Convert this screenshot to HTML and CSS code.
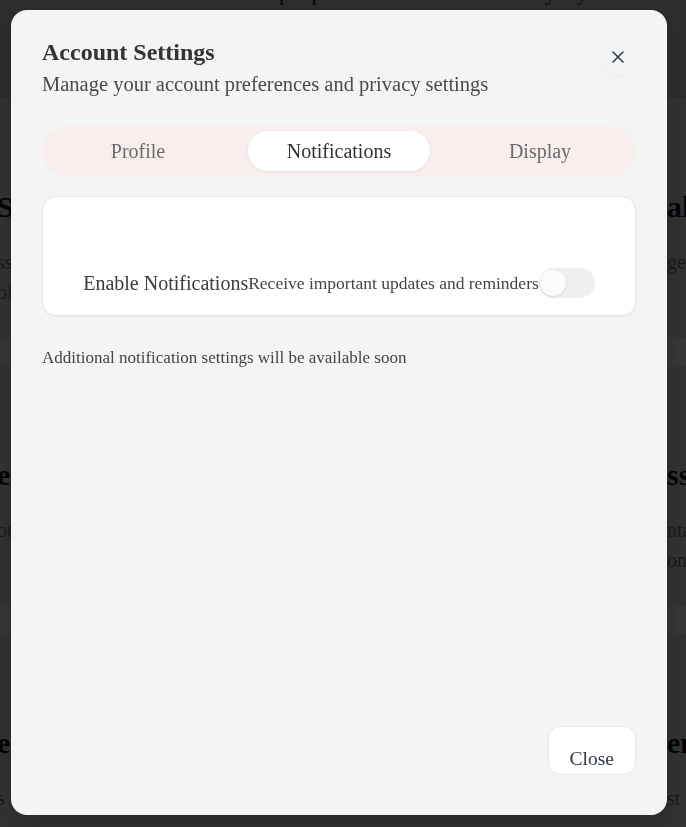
FILE: index.html
```html
<!DOCTYPE html>
<html lang="en">
<head>
<meta charset="utf-8">
<title>Account Settings</title>
<link rel="stylesheet" href="styles.css">
</head>
<body>
<div class="page">
  <header class="page-header">
    <p class="page-tagline">Simple practices for a calmer everyday life</p>
  </header>
  <section class="feature-row">
    <div class="feature feature-left">
      <h2>Sleep rituals</h2>
      <p>ssential evening habits</p>
      <p>olor and calm</p>
    </div>
    <div class="feature feature-right">
      <h2>al goals</h2>
      <p>get started today</p>
    </div>
    <div class="feature-band"></div>
  </section>
  <section class="feature-row">
    <div class="feature feature-left">
      <h2>e:</h2>
      <p>our daily notes</p>
    </div>
    <div class="feature feature-right">
      <h2>ss</h2>
      <p>ntain focus</p>
      <p>on the path</p>
    </div>
    <div class="feature-band"></div>
  </section>
  <section class="feature-row">
    <div class="feature feature-left">
      <h2>e</h2>
      <p>s</p>
    </div>
    <div class="feature feature-right">
      <h2>en</h2>
      <p>st</p>
    </div>
    <div class="feature-band"></div>
  </section>
</div>

<div class="overlay">
  <div class="modal" role="dialog" aria-labelledby="modal-title">
    <div class="modal-header">
      <div class="modal-heading">
        <h1 id="modal-title" class="modal-title">Account Settings</h1>
        <p class="modal-subtitle">Manage your account preferences and privacy settings</p>
      </div>
      <button class="icon-close" aria-label="Close">
        <svg width="12" height="12" viewBox="0 0 12 12" aria-hidden="true">
          <path d="M1 1 L11 11 M11 1 L1 11" stroke="#2d3748" stroke-width="1.5" stroke-linecap="round" fill="none"/>
        </svg>
      </button>
    </div>

    <div class="tabs" role="tablist">
      <button class="tab" role="tab">Profile</button>
      <button class="tab tab-active" role="tab">Notifications</button>
      <button class="tab" role="tab">Display</button>
    </div>

    <div class="setting-card">
      <div class="setting-row">
        <span class="setting-label">Enable Notifications</span>
        <span class="setting-desc">Receive important updates and reminders</span>
        <span class="switch" role="switch" aria-checked="false"><span class="switch-knob"></span></span>
      </div>
    </div>

    <p class="note">Additional notification settings will be available soon</p>

    <div class="modal-footer">
      <button class="btn-close">Close</button>
    </div>
  </div>
</div>
</body>
</html>
```

FILE: styles.css
```css
html, body {
  margin: 0;
  height: 100%;
  overflow: hidden;
}

body {
  font-family: "Liberation Serif", "Times New Roman", serif;
  background: #e8e8e8;
}

/* ---------- background page ---------- */
.page {
  height: 827px;
  overflow: hidden;
  background: #e8e8e8;
}

.page-header {
  height: 98px;
  background: #cfcfcf;
  overflow: hidden;
}

.page-tagline {
  margin: -19px 0 0;
  padding-left: 180px;
  text-align: center;
  font-size: 22px;
  line-height: 24px;
  color: #222;
}

.feature-row {
  height: 268px;
  display: grid;
  grid-template-columns: 11px 1fr 19px;
  grid-template-rows: 1fr 28px;
}

.feature {
  padding-top: 90px;
  white-space: nowrap;
}

.feature-left {
  grid-column: 1;
  margin-left: -3px;
}

.feature-right {
  grid-column: 3;
}

.feature h2 {
  margin: 0;
  font-size: 30px;
  line-height: 38px;
  font-weight: 700;
  color: #0d1420;
}

.feature p {
  margin: 0;
  font-size: 20px;
  line-height: 30px;
  color: #777;
}

.feature h2 + p {
  margin-top: 21px;
}

.feature-band {
  grid-column: 1 / -1;
  grid-row: 2;
  background: #ffffff;
}

/* ---------- overlay + modal ---------- */
.overlay {
  position: fixed;
  inset: 0;
  background: rgba(0, 0, 0, 0.78);
  padding: 10px 19px 12px 11px;
  display: flex;
}

.modal {
  width: 656px;
  height: 805px;
  box-sizing: border-box;
  background: #f4f4f4;
  border-radius: 16px;
  padding: 27px 31px 40px;
  display: flex;
  flex-direction: column;
  box-shadow: 0 10px 30px rgba(0, 0, 0, 0.25);
}

.modal-header {
  display: flex;
  justify-content: space-between;
  align-items: flex-start;
}

.modal-title {
  margin: 0;
  font-size: 24px;
  line-height: 30px;
  font-weight: 700;
  color: #333333;
}

.modal-subtitle {
  margin: 3px 0 0;
  font-size: 20.5px;
  line-height: 28px;
  color: #4a4a4a;
}

.icon-close {
  width: 36px;
  height: 36px;
  margin-top: 2px;
  border: none;
  border-radius: 50%;
  background: #f3f4f6;
  box-shadow: 0 1px 2px rgba(0, 0, 0, 0.04);
  display: flex;
  align-items: center;
  justify-content: center;
  padding: 0;
}

/* tabs */
.tabs {
  margin-top: 28px;
  display: grid;
  grid-template-columns: repeat(3, 182px);
  column-gap: 19px;
  padding: 5px;
  background: #f8eeee;
  border-radius: 25px;
}

.tab {
  height: 40px;
  border: none;
  background: transparent;
  border-radius: 20px;
  font-family: inherit;
  font-size: 20px;
  color: #6b6b6b;
  padding: 0;
}

.tab-active {
  background: #ffffff;
  color: #333333;
  box-shadow: 0 1px 3px rgba(0, 0, 0, 0.08);
}

/* setting card */
.setting-card {
  margin-top: 20px;
  background: #ffffff;
  border: 1px solid #e6e6e6;
  border-radius: 14px;
  padding: 71px 0 17px;
  box-shadow: 0 1px 2px rgba(0, 0, 0, 0.04);
}

.setting-row {
  height: 30px;
  display: flex;
  justify-content: center;
  align-items: center;
}

.setting-label {
  font-size: 20px;
  color: #3a3a3a;
}

.setting-desc {
  font-size: 17.5px;
  color: #444444;
}

.switch {
  width: 56px;
  height: 30px;
  border-radius: 15px;
  background: #f0f0f0;
  display: flex;
  align-items: center;
  padding-left: 1px;
  box-sizing: border-box;
}

.switch-knob {
  width: 26px;
  height: 26px;
  border-radius: 50%;
  background: #fbfbfb;
  box-shadow: 0 1px 3px rgba(0, 0, 0, 0.12);
}

.note {
  margin: 30px 0 0;
  font-size: 17px;
  line-height: 24px;
  color: #444444;
}

.modal-footer {
  margin-top: auto;
  display: flex;
  justify-content: flex-end;
}

.btn-close {
  height: 49px;
  box-sizing: border-box;
  padding: 21px 21px 4px;
  background: #ffffff;
  border: 1px solid #e6e6e6;
  border-radius: 12px;
  font-family: inherit;
  font-size: 19.5px;
  line-height: 22px;
  color: #2d3748;
}
```
